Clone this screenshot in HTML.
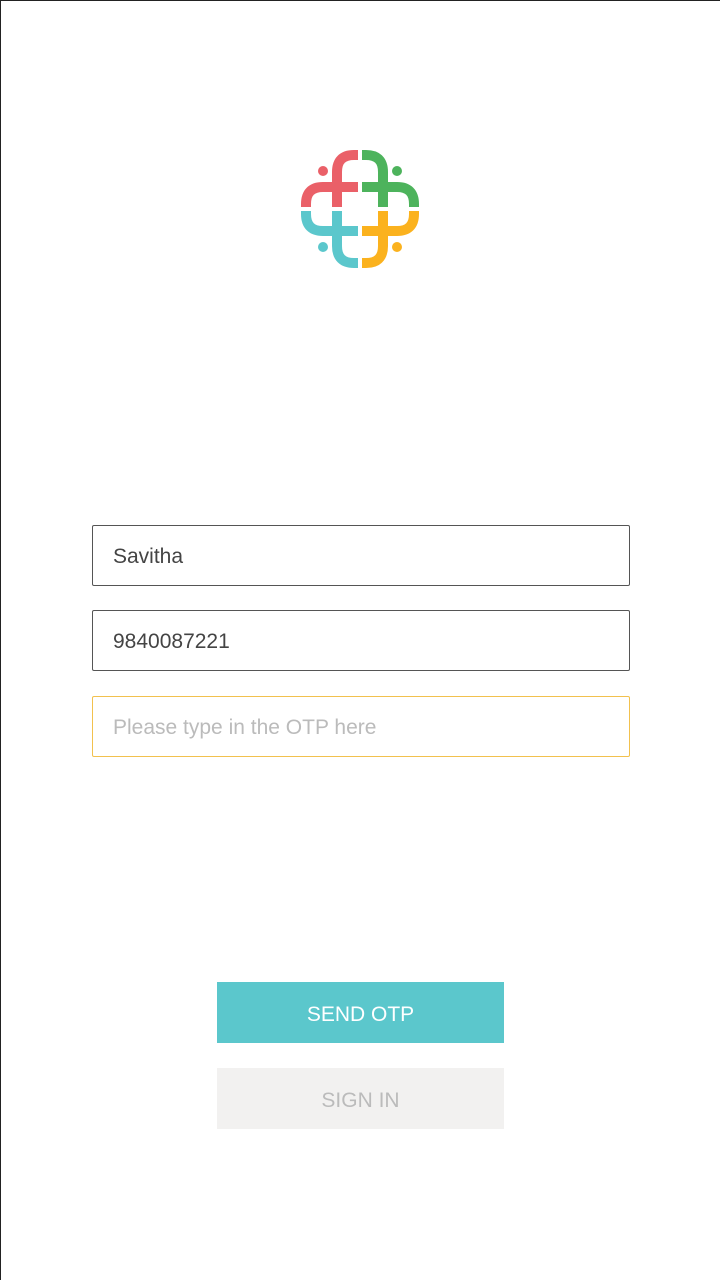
<!DOCTYPE html>
<html><head><style>
body{margin:0;width:720px;height:1280px;background:#fff;position:relative;overflow:hidden;font-family:"Liberation Sans",sans-serif}
.frame{position:absolute;left:0;top:0;width:719px;height:1279px;border-left:1px solid #222;border-top:1px solid #222}
.f{position:absolute;left:92px;width:536px;height:59px;border:1px solid #555;border-radius:2px;box-sizing:content-box;font-size:21px;color:#444;line-height:62px}
.f span{position:absolute;left:20px}
.b{position:absolute;left:217px;width:287px;height:61px;line-height:65px;text-align:center;font-size:21px}
</style></head><body>
<div class="frame"></div>
<svg width="720" height="300" style="position:absolute;left:0;top:0">
<g fill="none" stroke-width="10">
<g stroke="#ea6068"><path d="M337,207 V172 Q337,155 354,155 H358"/><path d="M358,187 H323 Q306,187 306,204 V207"/></g>
<g stroke="#4db35c" transform="translate(720,0) scale(-1,1)"><path d="M337,207 V172 Q337,155 354,155 H358"/><path d="M358,187 H323 Q306,187 306,204 V207"/></g>
<g stroke="#5bc7cc" transform="translate(0,418) scale(1,-1)"><path d="M337,207 V172 Q337,155 354,155 H358"/><path d="M358,187 H323 Q306,187 306,204 V207"/></g>
<g stroke="#fbb21e" transform="translate(720,418) scale(-1,-1)"><path d="M337,207 V172 Q337,155 354,155 H358"/><path d="M358,187 H323 Q306,187 306,204 V207"/></g>
</g>
<circle cx="323" cy="171" r="5" fill="#ea6068"/>
<circle cx="397" cy="171" r="5" fill="#4db35c"/>
<circle cx="323" cy="247" r="5" fill="#5bc7cc"/>
<circle cx="397" cy="247" r="5" fill="#fbb21e"/>
</svg>
<div class="f" style="top:525px"><span>Savitha</span></div>
<div class="f" style="top:610px"><span>9840087221</span></div>
<div class="f" style="top:696px;border-color:#f2c14e;color:#bbb"><span>Please type in the OTP here</span></div>
<div class="b" style="top:982px;background:#5bc7cc;color:#fff">SEND OTP</div>
<div class="b" style="top:1068px;background:#f2f1f0;color:#bbb">SIGN IN</div>
</body></html>
